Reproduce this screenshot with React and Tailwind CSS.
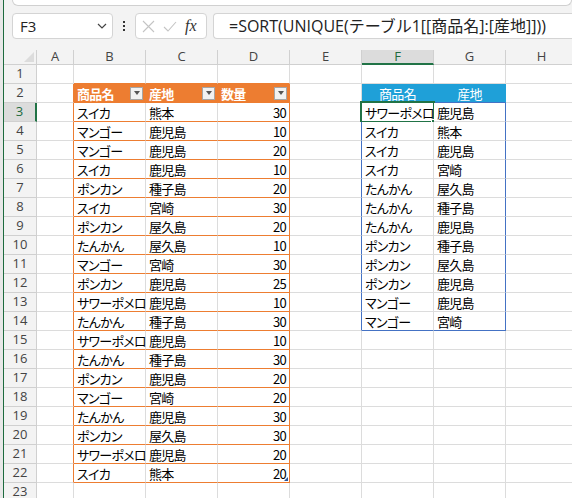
import React from 'react';

const COLS = ['A', 'B', 'C', 'D', 'E', 'F', 'G', 'H'];

const table = [
  ['スイカ', '熊本', 30],
  ['マンゴー', '鹿児島', 10],
  ['マンゴー', '鹿児島', 20],
  ['スイカ', '鹿児島', 10],
  ['ポンカン', '種子島', 20],
  ['スイカ', '宮崎', 30],
  ['ポンカン', '屋久島', 20],
  ['たんかん', '屋久島', 10],
  ['マンゴー', '宮崎', 30],
  ['ポンカン', '鹿児島', 25],
  ['サワーポメロ', '鹿児島', 10],
  ['たんかん', '種子島', 30],
  ['サワーポメロ', '鹿児島', 10],
  ['たんかん', '種子島', 30],
  ['ポンカン', '鹿児島', 20],
  ['マンゴー', '宮崎', 20],
  ['たんかん', '鹿児島', 30],
  ['ポンカン', '屋久島', 30],
  ['サワーポメロ', '鹿児島', 20],
  ['スイカ', '熊本', 20],
];

const spill = [
  ['サワーポメロ', '鹿児島'],
  ['スイカ', '熊本'],
  ['スイカ', '鹿児島'],
  ['スイカ', '宮崎'],
  ['たんかん', '屋久島'],
  ['たんかん', '種子島'],
  ['たんかん', '鹿児島'],
  ['ポンカン', '種子島'],
  ['ポンカン', '屋久島'],
  ['ポンカン', '鹿児島'],
  ['マンゴー', '鹿児島'],
  ['マンゴー', '宮崎'],
];

const FilterButton = () => (
  <div className="ml-auto mr-[2px] flex h-[13px] w-[13px] shrink-0 items-center justify-center border border-[#a6a6a6] bg-[#f2f2f2]">
    <div className="h-0 w-0 border-x-[3.5px] border-t-[4px] border-x-transparent border-t-[#555]" />
  </div>
);

const Cell = ({ r, c }) => {
  const inTable = r >= 2 && r <= 22;
  const inSpill = r >= 3 && r <= 14;
  let text = null;
  let align = 'justify-start pl-[3px]';
  let extra = 'text-black';
  let bR = 'border-r-[#dcdcdc]';
  let bB = 'border-b-[#dcdcdc]';
  let bg = 'bg-white';
  let overlay = null;

  if (c === 'A' && inTable) bR = 'border-r-[#ED7D31]';
  if (r === 1 && (c === 'B' || c === 'C' || c === 'D')) bB = 'border-b-[#ED7D31]';

  if (inTable && (c === 'B' || c === 'C' || c === 'D')) {
    bB = 'border-b-[#ED7D31]';
    if (c === 'D') bR = 'border-r-[#ED7D31]';
    if (r === 2) {
      bg = 'bg-[#ED7D31]';
      bR = 'border-r-[#ED7D31]';
      extra = 'font-bold text-white';
      text = { B: '商品名', C: '産地', D: '数量' }[c];
    } else {
      const row = table[r - 3];
      if (c === 'B') text = row[0];
      if (c === 'C') text = row[1];
      if (c === 'D') {
        text = row[2];
        align = 'justify-end pr-[3px]';
      }
    }
  }

  if (c === 'E' && inSpill) bR = 'border-r-[#4472C4]';
  if (r === 2 && (c === 'F' || c === 'G')) {
    bg = 'bg-[#1fa0d8]';
    bR = 'border-r-[#1fa0d8]';
    bB = 'border-b-[#4472C4]';
    extra = 'text-white';
    align = 'justify-center';
    text = c === 'F' ? '商品名' : '産地';
  }
  if (inSpill && (c === 'F' || c === 'G')) {
    const row = spill[r - 3];
    text = c === 'F' ? row[0] : row[1];
    if (c === 'G') bR = 'border-r-[#4472C4]';
    if (r === 14) bB = 'border-b-[#4472C4]';
  }

  // active cell + fill handle
  if (r === 3 && c === 'F') {
    overlay = (
      <>
        <div className="pointer-events-none absolute left-[-2px] top-[-2px] h-[22px] w-[75px] border-2 border-[#217346]" />
        <div className="absolute bottom-[-4px] right-[-4px] h-[6px] w-[6px] border border-white bg-[#217346]" />
      </>
    );
  }
  // table resize handle
  if (r === 22 && c === 'D') {
    overlay = (
      <div className="absolute bottom-[1px] right-[1px] h-[4px] w-[4px] bg-[#2f5597] [clip-path:polygon(100%_0,100%_100%,0_100%)]" />
    );
  }

  return (
    <div
      className={`relative flex h-[19px] items-center whitespace-nowrap border-r border-b text-[13px] leading-none tracking-[-0.7px] [font-feature-settings:'palt'] ${bR} ${bB} ${bg} ${align} ${extra}`}
    >
      <span>{text}</span>
      {r === 2 && (c === 'B' || c === 'C' || c === 'D') && <FilterButton />}
      {overlay}
    </div>
  );
};

const App = () => {
  const rows = Array.from({ length: 23 }, (_, i) => i + 1);

  return (
    <div className="flex h-[498px] w-[572px] overflow-hidden bg-[#f3f3f3] font-['Noto_Sans_CJK_JP','Noto_Sans',sans-serif]">
      {/* window edge */}
      <div className="flex w-[4px] shrink-0">
        <div className="w-[3px] bg-[#e8e8e8]" />
        <div className="w-[1px] bg-[#1e6b3f]" />
      </div>

      <div className="flex min-w-0 flex-1 flex-col">
        {/* ribbon bottom */}
        <div className="h-[13px] shrink-0 pl-[8px]">
          <div className="h-[6px] rounded-b-[6px] border-x border-b border-[#d0d0d0] bg-white" />
        </div>

        {/* formula bar */}
        <div className="flex h-[26px] shrink-0 items-stretch pl-[8px]">
          <div className="flex w-[101px] items-center rounded-[4px] border border-[#d4d4d4] bg-white pl-[7px] pr-[5px]">
            <span className="font-['Open_Sans',sans-serif] text-[15px] text-[#222]">F3</span>
            <svg className="ml-auto" width="10" height="6" viewBox="0 0 10 6">
              <path d="M1 1l4 4 4-4" fill="none" stroke="#444" strokeWidth="1.2" />
            </svg>
          </div>
          <div className="flex w-[22px] flex-col items-center justify-center gap-[2px]">
            <div className="h-[2px] w-[2px] bg-[#333]" />
            <div className="h-[2px] w-[2px] bg-[#333]" />
            <div className="h-[2px] w-[2px] bg-[#333]" />
          </div>
          <div className="flex w-[72px] items-center gap-[8px] rounded-[4px] border border-[#d4d4d4] bg-white pl-[6px]">
            <svg width="13" height="13" viewBox="0 0 13 13">
              <path d="M1 1l11 11M12 1L1 12" stroke="#c4c4c4" strokeWidth="1.1" />
            </svg>
            <svg width="14" height="11" viewBox="0 0 14 11">
              <path d="M1 6l4 4 8-9" fill="none" stroke="#c4c4c4" strokeWidth="1.1" />
            </svg>
            <span className="font-['Liberation_Serif',serif] text-[16px] italic text-[#333]">fx</span>
          </div>
          <div className="ml-[6px] flex flex-1 items-center rounded-l-[4px] border border-r-0 border-[#d4d4d4] bg-white pl-[15px]">
            <span className="whitespace-nowrap font-['Open_Sans','Noto_Sans_CJK_JP',sans-serif] text-[16px] text-[#222]">
              =SORT(UNIQUE(テーブル1[[商品名]:[産地]]))
            </span>
          </div>
        </div>

        <div className="h-[11px] shrink-0" />

        {/* sheet */}
        <div className="grid grid-cols-[33px_37px_72px_72px_72px_72px_72px_72px_72px] bg-white">
          <div className="relative h-[15px] border-r border-b border-[#d0d0d0] bg-[#f3f3f3]">
            <div className="absolute bottom-[2px] right-[2px] h-[10px] w-[10px] bg-[#dcdcdc] [clip-path:polygon(100%_0,100%_100%,0_100%)]" />
          </div>
          {COLS.map((c) => (
            <div
              key={c}
              className={
                c === 'F'
                  ? "flex h-[15px] items-center justify-center border-r border-b-2 border-r-[#d0d0d0] border-b-[#217346] bg-[#dcdcdc] font-['Open_Sans',sans-serif] text-[13px] text-[#1e6b3f]"
                  : "flex h-[15px] items-center justify-center border-r border-b border-[#d0d0d0] bg-[#f3f3f3] font-['Open_Sans',sans-serif] text-[13px] text-[#444]"
              }
            >
              {c}
            </div>
          ))}

          {rows.map((r) => (
            <React.Fragment key={r}>
              <div
                className={
                  r === 3
                    ? "flex h-[19px] items-center justify-center border-r-2 border-b border-r-[#217346] border-b-[#d0d0d0] bg-[#dcdcdc] font-['Open_Sans',sans-serif] text-[13px] text-[#1e6b3f]"
                    : "flex h-[19px] items-center justify-center border-r border-b border-[#d0d0d0] bg-[#f3f3f3] font-['Open_Sans',sans-serif] text-[13px] text-[#444]"
                }
              >
                {r}
              </div>
              {COLS.map((c) => (
                <Cell key={c} r={r} c={c} />
              ))}
            </React.Fragment>
          ))}
        </div>
      </div>
    </div>
  );
};

export default App;
